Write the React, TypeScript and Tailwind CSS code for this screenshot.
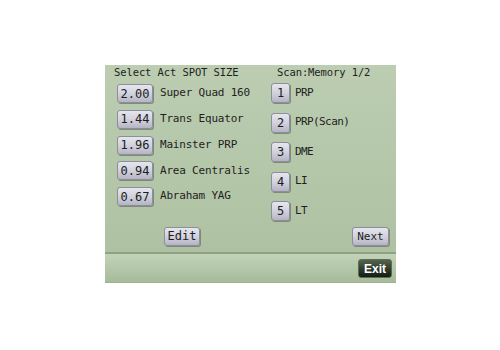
import React from "react";

const mono = { fontFamily: '"DejaVu Sans Mono", "Liberation Mono", monospace' };

function Btn({ children, w, h, cls = "" }: { children: React.ReactNode; w: string; h: string; cls?: string }) {
  return (
    <div
      className={`${w} ${h} ${cls} flex items-center justify-center rounded-[3px] border border-[#8d8d9c] bg-gradient-to-b from-[#e6e6ee] via-[#d2d2de] to-[#b4b4c4] text-[#1c1c1c] shadow-[1px_1px_0_#7f8a78] text-[12px] leading-none`}
      style={mono}
    >
      {children}
    </div>
  );
}

const left = [
  ["2.00", "Super Quad 160"],
  ["1.44", "Trans Equator"],
  ["1.96", "Mainster PRP"],
  ["0.94", "Area Centralis"],
  ["0.67", "Abraham YAG"],
];
const right = [
  ["1", "PRP"],
  ["2", "PRP(Scan)"],
  ["3", "DME"],
  ["4", "LI"],
  ["5", "LT"],
];

export default function App() {
  return (
    <div className="w-[500px] h-[350px] bg-white pt-[65px] pl-[105px]">
      <div className="w-[291px] h-[218px] flex flex-col">
        <div className="h-[187px] flex flex-col bg-gradient-to-b from-[#bccdb1] to-[#aec2a3] text-[#1e1e1e]" style={mono}>
          <div className="h-[14px] leading-[14px] text-[10.5px] flex pl-[9px] tracking-[-0.1px]">
            <span className="w-[163px]">Select Act SPOT SIZE</span>
            <span>Scan:Memory 1/2</span>
          </div>
          <div className="flex">
            <div className="w-[166px] pl-[12px] pt-[5px] flex flex-col gap-[6.8px]">
              {left.map(([v, l]) => (
                <div key={v} className="flex items-center h-[19px]">
                  <Btn w="w-[36px]" h="h-[19px]">{v}</Btn>
                  <span className="ml-[7px] text-[11px] tracking-[-0.2px]">{l}</span>
                </div>
              ))}
              <div className="mt-[14px] ml-[47px]">
                <Btn w="w-[36px]" h="h-[19px]">Edit</Btn>
              </div>
            </div>
            <div className="pt-[4px] flex flex-col gap-[9.5px]">
              {right.map(([v, l]) => (
                <div key={v} className="flex items-center h-[20px]">
                  <Btn w="w-[19px]" h="h-[20px]">{v}</Btn>
                  <span className="ml-[5px] text-[11px] tracking-[-0.6px]">{l}</span>
                </div>
              ))}
              <div className="mt-[-4px] ml-[81px]">
                <Btn w="w-[37px]" h="h-[19px]" cls="!text-[11px]">Next</Btn>
              </div>
            </div>
          </div>
        </div>
        <div className="h-[2px] bg-[#8fa384]" />
        <div className="flex-1 flex justify-end items-start pt-[5px] pr-[4px] bg-gradient-to-b from-[#c3d3b9] to-[#a6bb9a] border-b border-[#9db190]">
          <div
            className="w-[34px] h-[19px] flex items-center justify-center rounded-[3px] border border-[#5c6a58] bg-gradient-to-b from-[#55654f] to-[#141b13] text-white text-[12px] font-bold"
            style={{ fontFamily: '"Liberation Sans", Arial, sans-serif' }}
          >
            Exit
          </div>
        </div>
      </div>
    </div>
  );
}
